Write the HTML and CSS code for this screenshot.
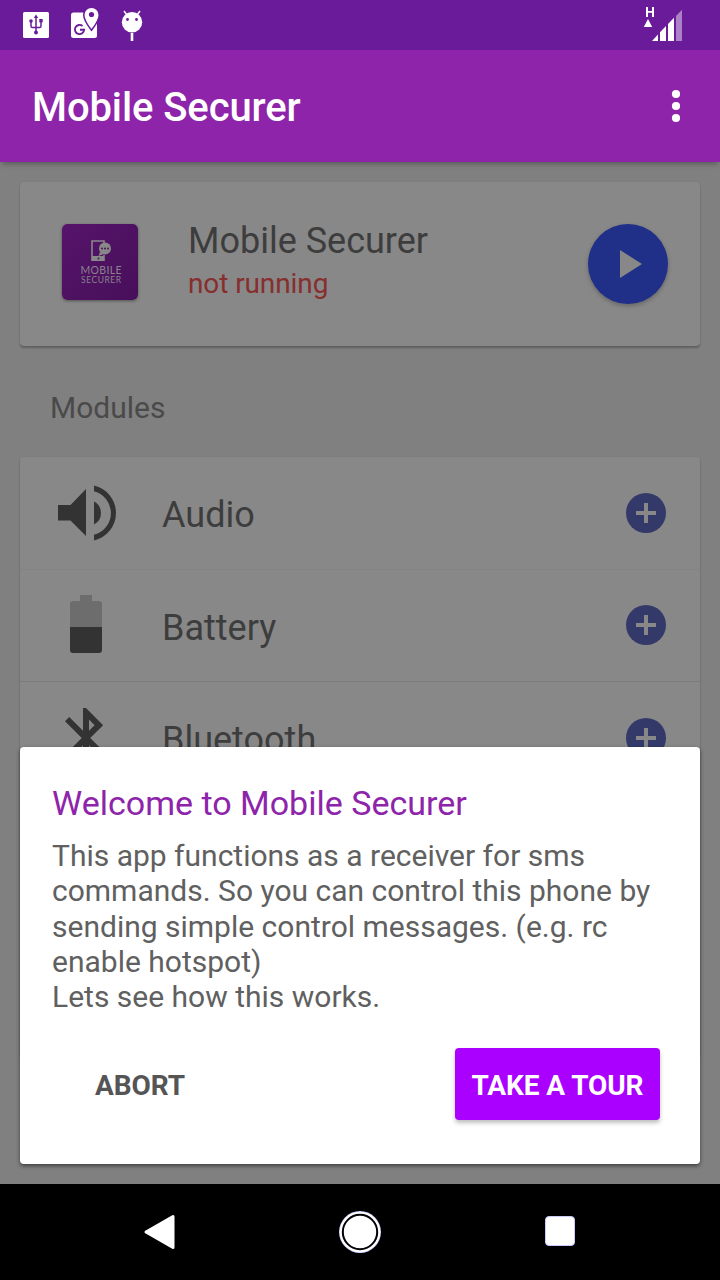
FILE: index.html
```html
<!DOCTYPE html>
<html lang="en">
<head>
<meta charset="utf-8">
<title>Mobile Securer</title>
<link rel="stylesheet" href="styles.css">
</head>
<body>
<div class="screen">
  <header class="status">
    <svg class="status-icons" width="130" height="34" viewBox="20 6 130 34" fill="#fff">
      <rect x="23" y="12" width="26" height="26" rx="1.5"/>
      <g fill="none" stroke="#6a1b9a" stroke-width="1.5"><path d="M36 17v16M31 21v5q0 1.500 1.500 1.500h7q1.500 0 1.500-1.500v-5"/></g>
      <g fill="#6a1b9a"><path d="M36 14.500l2.200 3.500h-4.400z"/><circle cx="36" cy="32.500" r="2"/><circle cx="31" cy="21" r="1.800"/><rect x="39.300" y="19" width="3.400" height="3.400"/></g>
      <rect x="71" y="12.500" width="26" height="25.500" rx="2.500"/>
      <path d="M91.500 8a7 7 0 0 0-7 7c0 5 7 14 7 14s7-9 7-14a7 7 0 0 0-7-7z" stroke="#6a1b9a" stroke-width="3"/>
      <path d="M91.500 8a7 7 0 0 0-7 7c0 5 7 14 7 14s7-9 7-14a7 7 0 0 0-7-7z"/>
      <circle cx="91.500" cy="14.500" r="2.600" fill="#6a1b9a"/>
      <path d="M82.500 26a4.600 4.600 0 1 0 1.600 3.700H80" fill="none" stroke="#6a1b9a" stroke-width="1.900"/>
      <circle cx="132" cy="22.300" r="10.200"/>
      <path d="M124 11l3 4M140 11l-3 4" stroke="#fff" stroke-width="1.500"/>
      <rect x="130.700" y="33" width="2.600" height="8"/>
      <g fill="#6a1b9a"><circle cx="127.500" cy="19.500" r="1.400"/><circle cx="136.500" cy="19.500" r="1.400"/></g>
    </svg>
    <svg class="signal" width="42" height="38" viewBox="642 4 42 38" fill="#fff">
      <path d="M646 7h2v4h4V7h2v10h-2v-4.300h-4V17h-2zM648 19l4.200 8h-8.400z"/>
      <path d="M652 41l6-6.500v6.500zM660 32.300l6-6.300v15h-6zM668 24l6-6.300v23.300h-6z"/>
      <path d="M676 16l6-6.300v31.300h-6z" opacity=".45"/>
    </svg>
  </header>
  <div class="appbar">
    <h1>Mobile Securer</h1>
    <svg class="more" width="10" height="34" viewBox="0 0 10 34" fill="#fff"><circle cx="5" cy="5" r="4.100"/><circle cx="5" cy="17" r="4.100"/><circle cx="5" cy="29" r="4.100"/></svg>
  </div>
  <main class="content">
    <section class="card service">
      <svg class="logo" width="76" height="76" viewBox="0 0 76 76">
        <defs><linearGradient id="lg" x2="1" y2="1"><stop stop-color="#56146a"/><stop offset="1" stop-color="#470f5a"/></linearGradient></defs>
        <rect width="76" height="76" rx="5" fill="url(#lg)"/>
        <path d="M42 31v5.300H30V17h12v3" fill="none" stroke="#888" stroke-width="1.600"/>
        <path d="M30 32h12v5H30z" fill="#888"/>
        <circle cx="43" cy="24.500" r="6" fill="#888"/><path d="M38 28l-1.500 4 5.500-2z" fill="#888"/>
        <g fill="#4c1160"><circle cx="40" cy="24.500" r="1"/><circle cx="43" cy="24.500" r="1"/><circle cx="46" cy="24.500" r="1"/><circle cx="36.500" cy="34.500" r="1"/></g>
        <text x="18.500" y="50.300" textLength="41" class="logo-a">MOBILE</text>
        <text x="19" y="59" textLength="40" class="logo-b">SECURER</text>
      </svg>
      <div class="service-text">
        <div class="service-name">Mobile Securer</div>
        <div class="service-state">not running</div>
      </div>
      <div class="fab"><svg width="80" height="80" viewBox="0 0 80 80"><path d="M32 26v28l22-14z" fill="#888"/></svg></div>
    </section>
    <h2>Modules</h2>
    <section class="card modules">
      <div class="row">
        <svg class="module-icon" width="72" height="72" viewBox="0 0 72 72" fill="#333"><path d="M8 28h12.500L36 12v47L20.500 43.500H8zM44 8.500a28.200 28.200 0 0 1 0 55v-5.700a22.500 22.500 0 0 0 0-43.600zM44 24.500a13 13 0 0 1 0 23z"/></svg>
        <span class="module-name">Audio</span>
        <svg class="add" width="40" height="40" viewBox="0 0 40 40"><circle cx="20" cy="20" r="20" fill="#333969"/><path d="M20 10v20M10 20h20" stroke="#888" stroke-width="4"/></svg>
      </div>
      <div class="row">
        <svg class="module-icon" width="72" height="72" viewBox="0 0 72 72"><path d="M20 15q0-3 3-3h7V6h12v6h7q3 0 3 3v23H20z" fill="#6d6d6d"/><path d="M20 38h32v23q0 3-3 3H23q-3 0-3-3z" fill="#333"/></svg>
        <span class="module-name">Battery</span>
        <svg class="add" width="40" height="40" viewBox="0 0 40 40"><circle cx="20" cy="20" r="20" fill="#333969"/><path d="M20 10v20M10 20h20" stroke="#888" stroke-width="4"/></svg>
      </div>
      <div class="row">
        <svg class="module-icon" width="72" height="72" viewBox="0 0 24 24" fill="#333"><path d="M17.710 7.710L12 2h-1v7.590L6.410 5 5 6.410 10.590 12 5 17.590 6.410 19 11 14.410V22h1l5.710-5.710-4.300-4.290 4.300-4.290zM13 5.830l1.880 1.880L13 9.590V5.830zm1.880 10.460L13 18.170v-3.760l1.880 1.880z"/></svg>
        <span class="module-name">Bluetooth</span>
        <svg class="add" width="40" height="40" viewBox="0 0 40 40"><circle cx="20" cy="20" r="20" fill="#333969"/><path d="M20 10v20M10 20h20" stroke="#888" stroke-width="4"/></svg>
      </div>
    </section>
  </main>
  <section class="dialog">
    <h3>Welcome to Mobile Securer</h3>
    <p>This app functions as a receiver for sms<br>commands. So you can control this phone by<br>sending simple control messages. (e.g. rc<br>enable hotspot)<br>Lets see how this works.</p>
    <div class="actions">
      <button class="btn abort">ABORT</button>
      <button class="btn tour">TAKE A TOUR</button>
    </div>
  </section>
  <nav class="navbar">
    <svg width="48" height="48" viewBox="0 0 48 48"><path d="M10 24L37 8.500v31z" fill="#fff" stroke="#fff" stroke-width="3" stroke-linejoin="round"/></svg>
    <svg width="48" height="48" viewBox="0 0 48 48"><circle cx="24" cy="24" r="21" fill="#c9cbff"/><circle cx="24" cy="24" r="20.300" fill="#fff"/><circle cx="24" cy="24" r="17.200" fill="#fff" stroke="#000" stroke-width="2"/></svg>
    <svg width="48" height="48" viewBox="0 0 48 48"><rect x="9.500" y="8.500" width="29" height="29" rx="3.500" fill="#fff" stroke="#c9cbff"/></svg>
  </nav>
</div>
</body>
</html>
```

FILE: styles.css
```css
* { box-sizing: border-box; }
body { margin: 0; font-family: Roboto, sans-serif; }
h1, h2, h3, p { margin: 0; }
.screen { position: relative; width: 720px; height: 1280px; overflow: hidden; display: flex; flex-direction: column; background: #808080; }
.status { flex: none; height: 50px; background: #6a1b9a; display: flex; justify-content: space-between; align-items: flex-start; padding: 6px 36px 0 20px; }
.status-icons { overflow: visible; }
.signal { margin-top: -2px; }
.appbar { flex: none; height: 112px; background: #8e24aa; display: flex; justify-content: space-between; align-items: center; padding: 2px 39px 0 32px; box-shadow: 0 4px 5px -2px rgba(0,0,0,.3); z-index: 1; }
h1 { font-size: 40px; font-weight: 500; line-height: 48px; letter-spacing: -.1px; padding-top: 2px; color: #fff; }
.more { margin-top: -2px; }
.content { flex: 1; min-height: 0; overflow: hidden; padding: 20px 20px 0; }
.card { background: #888; border-radius: 4px; box-shadow: 0 2px 2px rgba(0,0,0,.25), 0 0 2px rgba(0,0,0,.05); }
.service { height: 164px; display: flex; align-items: flex-start; padding: 42px 32px 0 42px; }
.logo { border-radius: 5px; box-shadow: 0 1px 3px rgba(0,0,0,.4); }
.logo-a, .logo-b { font-family: Lato, sans-serif; fill: #8a818d; }
.logo-a { font-size: 10.5px; }
.logo-b { font-size: 8.5px; }
.service-text { flex: 1; padding: 0 0 0 50px; margin-top: -5px; }
.service-name { font-size: 36px; line-height: 44px; color: #3d3d3d; }
.service-state { font-size: 28px; line-height: 34px; margin-top: 4px; letter-spacing: -.1px; color: #872e2e; }
.fab { width: 80px; height: 80px; border-radius: 50%; background: #202f88; box-shadow: 0 2px 4px rgba(0,0,0,.25); }
h2 { font-size: 30px; font-weight: 400; line-height: 36px; color: #4a4a4a; padding: 43.500px 0 0 30px; height: 111px; }
.modules { height: 600px; }
.row { height: 112.5px; display: flex; align-items: center; padding: 0 34px 0 30px; border-bottom: 1px solid #7b7b7b; }
.row:first-child { border-bottom-color: #828282; }
.module-icon { margin-right: 40px; }
.module-name { flex: 1; font-size: 36px; line-height: 44px; padding-top: 5px; color: #3d3d3d; }
.dialog { position: absolute; left: 20px; top: 747px; width: 680px; height: 417px; background: #fff; border-radius: 4px; padding: 34px 40px 44px 32px; display: flex; flex-direction: column; box-shadow: 0 2px 4px rgba(0,0,0,.5); z-index: 2; }
h3 { font-size: 34px; font-weight: 400; line-height: 44px; color: #8e24aa; }
p { font-size: 30px; line-height: 35.25px; color: #606060; padding-top: 13px; white-space: nowrap; }
.actions { margin-top: auto; display: flex; justify-content: space-between; }
.btn { font: 700 28px/70px Roboto, sans-serif; letter-spacing: -.1px; height: 72px; border: 0; border-radius: 4px; padding: 3px 0 0; }
.abort { background: none; color: #555; width: 176px; }
.tour { background: #a0f; color: #fff; width: 205px; box-shadow: 0 3px 4px rgba(0,0,0,.25); }
.navbar { flex: none; height: 96px; background: #000; display: flex; justify-content: space-between; align-items: center; padding: 0 136px; }
```
